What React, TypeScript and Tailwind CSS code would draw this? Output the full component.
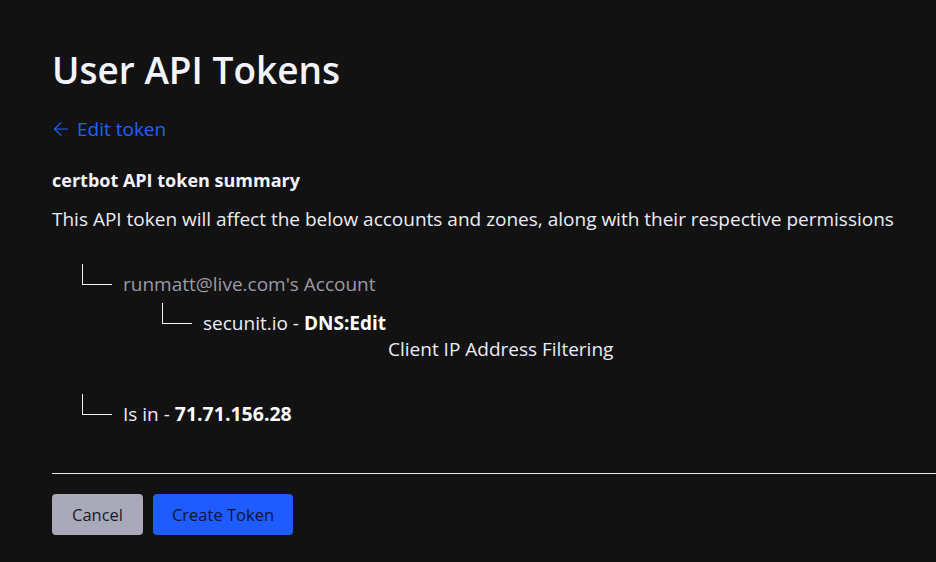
import { ArrowLeft } from 'lucide-react';

// One branch of the permissions tree: an L-shaped connector followed by its label
function Branch({ indent, children, muted }: { indent: string; children: React.ReactNode; muted?: boolean }) {
  return (
    <div className={`flex items-start ${indent}`}>
      <span className="-mt-[7px] h-[21px] w-[30px] shrink-0 border-b border-l border-[#f2f2f2]" />
      <span className={`ml-[11px] ${muted ? 'text-[#9a9aa4]' : 'text-[#ececf4]'}`}>{children}</span>
    </div>
  );
}

export default function App() {
  return (
    <div
      className="min-h-screen bg-[#121212] pl-[52px] pt-[42px] text-[19px] leading-[26px] text-[#ececf4]"
      style={{ fontFamily: '"Open Sans", "Noto Sans", sans-serif' }}
    >
      <h1 className="text-[37px] font-semibold leading-[56px] text-[#f4f4ff]">User API Tokens</h1>

      <a className="mt-[18px] flex items-center gap-[5px] text-[#2160ff]" href="#">
        <ArrowLeft size={22} strokeWidth={1.3} className="-ml-[2px]" />
        <span>Edit token</span>
      </a>

      <h5 className="mt-[25px] text-[18px] font-bold text-[#f4f4ff]">certbot API token summary</h5>
      <p className="mt-[13px]">
        This API token will affect the below accounts and zones, along with their respective permissions
      </p>

      <div className="mt-[39px]">
        <Branch indent="ml-[30px]" muted>
          runmatt@live.com's Account
        </Branch>
        <div className="mt-[13px]">
          <Branch indent="ml-[110px]">
            secunit.io - <b className="font-bold text-white">DNS:Edit</b>
          </Branch>
        </div>
        <div className="ml-[336px]">Client IP Address Filtering</div>
        <div className="mt-[39px]">
          <Branch indent="ml-[30px]">
            Is in - <b className="text-[19.5px] font-bold text-white">71.71.156.28</b>
          </Branch>
        </div>
      </div>

      <hr className="mt-[46px] border-t border-[#e8e8e8]" />

      <div className="mt-[20px] flex gap-[10px] pb-[27px] text-[16.5px]">
        <button className="h-[41px] w-[91px] rounded-[4px] bg-[#a9a9ba] text-[#1a1a2a]">Cancel</button>
        <button className="h-[41px] w-[140px] rounded-[4px] bg-[#1f5cff] text-[#0e1436]">Create Token</button>
      </div>
    </div>
  );
}
